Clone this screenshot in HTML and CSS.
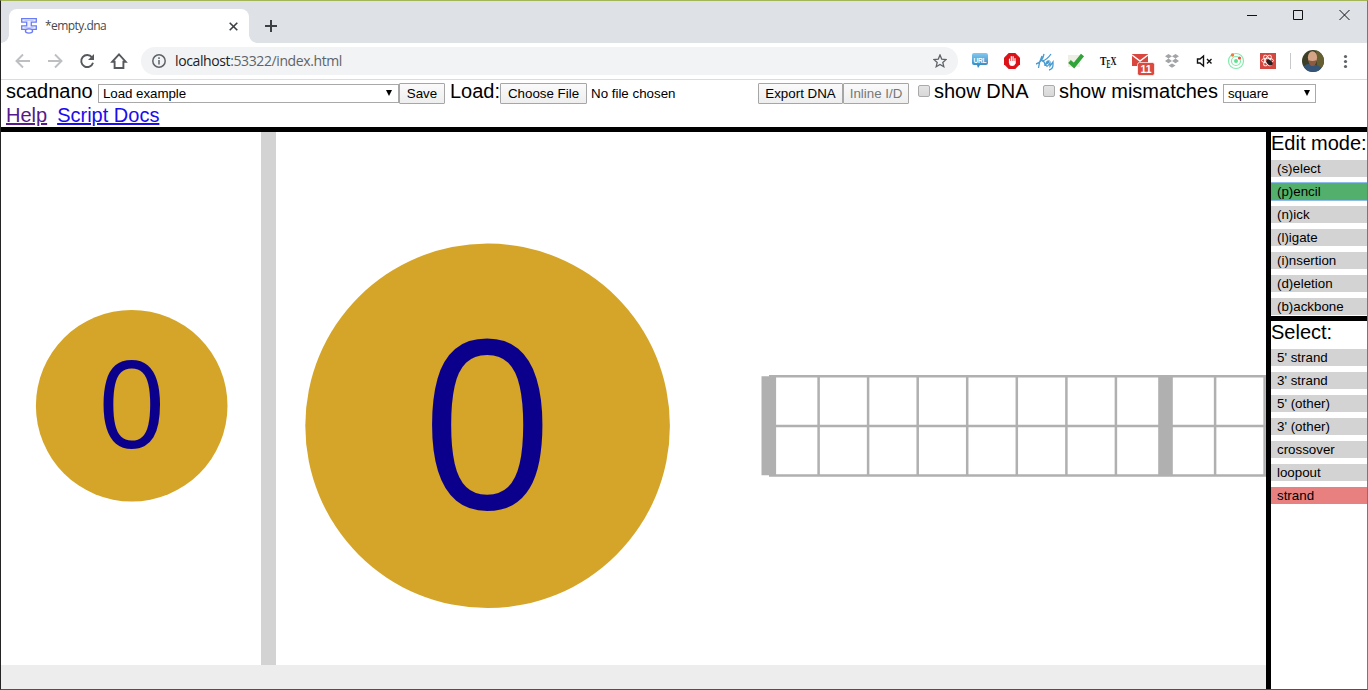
FILE: index.html
```html
<!DOCTYPE html>
<html lang="en">
<head>
<meta charset="utf-8">
<title>*empty.dna</title>
<link rel="stylesheet" href="styles.css">
</head>
<body>
<div class="window">
  <div class="tabstrip">
    <div class="tab">
      <svg class="favicon" width="16" height="16" viewBox="0 0 16 16" fill="#eef0ff" stroke="#6a7cf5" stroke-width="1.3"><path d="M.7.7h14.600v3.500h-5v3.600h5v3.500H.7V7.800h5V4.200h-5z"/><path d="M3.500 2.500h9M3.500 9.500h9" stroke="#c3cafc" stroke-width="1"/><ellipse cx="8" cy="13" rx="3.600" ry="2.100" fill="#fff"/></svg>
      <span class="tab-title">*empty.dna</span>
      <svg class="tab-close" width="9" height="9" viewBox="0 0 9 9" stroke="#3c4043" stroke-width="1.6"><path d="M.7.7l7.600 7.600M8.300.7L.7 8.300"/></svg>
    </div>
    <svg class="newtab" width="12" height="12" viewBox="0 0 12 12" stroke="#3c4043" stroke-width="2"><path d="M6 0v12M0 6h12"/></svg>
    <svg class="winbtns" width="104" height="12" viewBox="0 0 104 12" fill="none" stroke="#111" stroke-width="1"><path d="M0 5.500h10M46.500.5h9v9h-9z"/><path d="M92.500 0l10 10M102.500 0l-10 10"/></svg>
  </div>
  <div class="toolbar">
    <svg class="nav" width="130" height="18" viewBox="0 0 130 18" fill="none" stroke="#bdbfc2" stroke-width="1.900">
      <path d="M15 9H2M8 2.500L1.500 9 8 15.500M33 9h13M40 2.500L46.500 9 40 15.500"/>
      <path d="M77 5.400A6 6 0 1 0 78 10.700" stroke="#55585c"/><path d="M79 2v6h-6z" fill="#55585c" stroke="none"/>
      <path d="M97.300 9.700L104 2.300l6.700 7.400h-2.300V16h-8.800V9.700z" stroke="#55585c"/>
    </svg>
    <div class="omnibox">
      <svg width="14" height="14" viewBox="0 0 14 14" fill="none" stroke="#5f6368" stroke-width="1.500"><circle cx="7" cy="7" r="6.200"/><path d="M7 6v4.500M7 3.300v1.600"/></svg>
      <span class="url"><b>localhost</b>:53322/index.html</span>
      <svg class="star" width="14" height="14" viewBox="0 0 14 14" fill="none" stroke="#5f6368" stroke-width="1.300"><path d="M7 1l1.700 4.100 4.400.4-3.300 2.900 1 4.300L7 10.400l-3.800 2.300 1-4.300L.9 5.500l4.400-.4z"/></svg>
    </div>
    <svg class="extensions" width="392" height="32" viewBox="964 45 392 32">
      <defs><linearGradient id="bubble" x2="0" y2="1"><stop stop-color="#83c9f1"/><stop offset="1" stop-color="#287db8"/></linearGradient>
      <clipPath id="face"><circle cx="1313" cy="61" r="11"/></clipPath></defs>
      <path d="M974 53h12q2 0 2 2v8q0 2-2 2h-6l-2 3-1-3h-3q-2 0-2-2v-8q0-2 2-2z" fill="url(#bubble)"/><text x="973.500" y="63" class="ico-url" textLength="13">URL</text>
      <path d="M1008.700 53h6.600l4.700 4.700v6.600l-4.700 4.700h-6.600l-4.700-4.700v-6.600z" fill="#dc1219"/>
      <path d="M1009.500 63v-4M1011.300 62v-5.500M1013.100 62v-5.500M1015 63v-4.500" stroke="#fff" stroke-width="1.200" stroke-linecap="round"/><path d="M1009 61h6.500v2.500q-1 2.500-3 2.500-2 0-3-1z" fill="#fff"/>
      <g fill="none" stroke="#4a9bcf" stroke-width="1.300"><path d="M1036 64c4-1 7-5 8-10M1042 56q-3 6-3.500 12M1051 54q-4 6-9 7 3 0 3 5M1046 64q3-1 3-3-3 0-3 4 1 3 4-2v3l3-4v3q0 4-4 5"/></g>
      <path d="M1068 55h12v12h-12z" fill="#efeee4"/><path d="M1069.500 61.500l4.500 4 8.500-10.500" fill="none" stroke="#30a33a" stroke-width="4"/>
      <g class="ico-tex"><text x="1100" y="65" textLength="6.500" lengthAdjust="spacingAndGlyphs">T</text><text x="1106.500" y="67.500" textLength="4" lengthAdjust="spacingAndGlyphs">E</text><text x="1110.500" y="65" textLength="6" lengthAdjust="spacingAndGlyphs">X</text></g>
      <path d="M1132 54h16v12h-16z" fill="#d9463e"/><path d="M1132 55l8 6 8-6" fill="none" stroke="#fff" stroke-width="1.500"/>
      <rect x="1137.500" y="62.500" width="17" height="13" rx="2" fill="#dc4a3e" stroke="#fff" stroke-width=".7"/><text x="1140.500" y="73" class="badge" textLength="11">11</text>
      <path d="M1168.500 54l3.500 2.300 3.500-2.300 3.500 2.300-3.500 2.300 3.500 2.300-3.500 2.300-3.500-2.300-3.500 2.300-3.500-2.300 3.500-2.300-3.500-2.300zM1172 63.500l3.500 2-3.500 2.300-3.500-2.300z" fill="#a2a4a7"/><path d="M1172 56.300l3.500 2.300-3.500 2.300-3.500-2.300z" fill="#fff"/>
      <path d="M1197.500 59h2.500l3.500-3v10l-3.500-3h-2.500z" fill="none" stroke="#111" stroke-width="1.400"/><path d="M1207 59l4.500 4.500M1211.500 59l-4.500 4.500" stroke="#111" stroke-width="1.400"/>
      <g fill="none" stroke="#86e9ad" stroke-width="1.200"><circle cx="1236" cy="61" r="7.500"/><circle cx="1236" cy="61" r="4.500"/></g><circle cx="1236" cy="61" r="2" fill="#5fe08f"/><circle cx="1232.500" cy="55" r="1.700" fill="#f37a3c"/><circle cx="1239.500" cy="58" r="1.600" fill="#ef4f43"/>
      <path d="M1260 53h16v16h-16z" fill="#d2473f"/><g fill="none" stroke="#fff" stroke-width=".9"><ellipse cx="1267.500" cy="60.500" rx="6" ry="2.300"/><ellipse cx="1267.500" cy="60.500" rx="6" ry="2.300" transform="rotate(60 1267.500 60.500)"/><ellipse cx="1267.500" cy="60.500" rx="6" ry="2.300" transform="rotate(-60 1267.500 60.500)"/></g><ellipse cx="1269.500" cy="62.500" rx="3.500" ry="2.300" transform="rotate(40 1269.500 62.500)" fill="#222"/>
      <path d="M1290.500 53v16" stroke="#c6c8cb"/>
      <g clip-path="url(#face)"><path d="M1301 49h24v24h-24z" fill="#3c3f26"/><path d="M1316 49h9v18h-8z" fill="#665f32"/><path d="M1302 73q1-10 8-9l6 1q6 1 8 8z" fill="#365475"/><ellipse cx="1312.500" cy="57.500" rx="4.600" ry="6.200" fill="#d5a486"/><path d="M1308.500 60q4 2 8 0-.5 6-4 6-3.500 0-4-6z" fill="#8b5b43"/></g>
      <g fill="#5f6368"><circle cx="1345.500" cy="56.500" r="1.600"/><circle cx="1345.500" cy="61.500" r="1.600"/><circle cx="1345.500" cy="66.500" r="1.600"/></g>
    </svg>
  </div>
  <header class="menu">
    <div class="menu-row">
      <span class="brand">scadnano</span>
      <div class="select examples">Load example<i></i></div>
      <button class="save">Save</button>
      <span class="load">Load:</span>
      <button class="choose">Choose File</button>
      <span class="nofile">No file chosen</span>
      <button class="export">Export DNA</button>
      <button class="inline" disabled>Inline I/D</button>
      <label><input type="checkbox" class="check">show DNA</label>
      <label class="mismatches"><input type="checkbox" class="check">show mismatches</label>
      <div class="select grid-type">square<i></i></div>
    </div>
    <div class="links"><a class="visited" href="#">Help</a><a href="#">Script Docs</a></div>
  </header>
  <div class="content">
    <div class="views">
      <div class="panes">
        <svg class="side-view" width="260" height="533" viewBox="1 132 260 533"><circle cx="131.700" cy="405.700" r="95.800" fill="#d4a529"/><text class="helix side-num" x="131.700" y="448">0</text></svg>
        <div class="divider"></div>
        <svg class="main-view" width="990" height="533" viewBox="276 132 990 533">
          <circle cx="487.600" cy="425.800" r="182.300" fill="#d4a529"/><text class="helix main-num" x="487.300" y="508.500">0</text>
          <g fill="none" stroke="#b0b0b0"><path stroke-width="2.500" d="M769 376.300h497M769 426h497M769 475.500h497M818.600 376v100M868.100 376v100M917.700 376v100M967.200 376v100M1016.800 376v100M1066.400 376v100M1115.900 376v100M1215.100 376v100M1264.600 376v100"/><path stroke-width="14.600" d="M768.800 376.300v99M1165.500 376.300v99"/></g>
        </svg>
      </div>
      <div class="footer"></div>
    </div>
    <aside class="modes">
      <section class="edit"><h2>Edit mode:</h2>
        <button>(s)elect</button><button class="active">(p)encil</button><button>(n)ick</button><button>(l)igate</button><button>(i)nsertion</button><button>(d)eletion</button><button>(b)ackbone</button>
      </section>
      <section><h2>Select:</h2>
        <button>5' strand</button><button>3' strand</button><button>5' (other)</button><button>3' (other)</button><button>crossover</button><button>loopout</button><button class="chosen">strand</button>
      </section>
    </aside>
  </div>
</div>
</body>
</html>
```
FILE: styles.css
```css
* { box-sizing: border-box; }
body { margin: 0; width: 1368px; height: 690px; overflow: hidden; font-family: "Liberation Sans", sans-serif; font-size: 20px; color: #000; }
svg { display: block; flex: none; }
.window { display: flex; flex-direction: column; height: 690px; border: 1px solid; border-color: #a3b557 #777 #5c5232 #242424; background: #fff; }
.tabstrip { height: 42px; flex: none; background: #dee1e6; display: flex; padding-left: 8px; }
.tab { width: 240px; height: 34px; margin-top: 8px; background: #fff; border-radius: 8px 8px 0 0; display: flex; align-items: center; padding: 0 12px 0 12px; position: relative; }
.tab::before, .tab::after { content: ""; position: absolute; bottom: 0; width: 8px; height: 8px; }
.tab::before { left: -8px; background: radial-gradient(circle at 0 0, transparent 7.5px, #fff 8px); }
.tab::after { right: -8px; background: radial-gradient(circle at 100% 0, transparent 7.5px, #fff 8px); }
.tab-title { font: 12px "Open Sans", sans-serif; letter-spacing: -.55px; color: #45494d; margin: -1px 0 0 8px; }
.tab-close { margin-left: auto; margin-right: -.5px; }
.newtab { margin: 19px 0 0 16px; }
.winbtns { margin: 9px 16px 0 auto; }
.toolbar { height: 37px; flex: none; display: flex; align-items: center; border-bottom: 1px solid #dadce0; }
.nav { margin-left: 14px; }
.omnibox { width: 817px; height: 28px; margin-left: -4px; border-radius: 14px; background: #f1f3f4; display: flex; align-items: center; padding: 0 11px; }
.url { font: 14px "Open Sans", sans-serif; color: #5f6368; margin: -1px 0 0 9px; letter-spacing: -.39px; }
.url b { font-weight: 400; color: #202124; }
.star { margin-left: auto; }
.extensions { margin-left: 6px; }
.ico-url { font: bold 6.500px "Liberation Sans", sans-serif; fill: #fff; }
.ico-tex { font: bold 12px "Liberation Serif", serif; fill: #111; }
.badge { font: bold 10.500px "Liberation Sans", sans-serif; fill: #fff; }

.menu { height: 52px; flex: none; border-bottom: 5px solid #000; padding-left: 5px; }
.menu-row { height: 24px; display: flex; align-items: flex-start; line-height: 23px; white-space: nowrap; }
.brand { width: 92px; }
.select { height: 19px; margin-top: 4px; border: 1px solid #a9a9a9; font-size: 13.333px; line-height: 18px; padding: 0 6px 0 4px; display: flex; justify-content: space-between; letter-spacing: -.05px; }
.select i { width: 6px; height: 6px; margin-top: 5px; background: #000; clip-path: polygon(0 0, 100% 0, 50% 100%); }
.examples { width: 301px; }
button { font: 13.333px "Liberation Sans", sans-serif; color: #000; padding: 0; white-space: nowrap; }
.menu button { height: 21px; margin-top: 3px; border: 1px solid #a6a6a6; border-radius: 1px; background: linear-gradient(#fafafa, #eee); }
.menu .save { width: 46px; }
.load { width: 55px; padding-left: 5px; }
.menu .choose { width: 87px; }
.nofile { width: 171px; padding-left: 4px; font-size: 13.333px; line-height: 27px; }
.menu .export { width: 85px; }
.menu .inline { width: 66px; color: #777; }
label { display: flex; padding-left: 9px; width: 125px; }
.check { appearance: none; width: 12px; height: 12px; flex: none; margin: 5px 4px 0 0; border: 1px solid #aaa; border-radius: 2px; background: linear-gradient(#e4e4e4, #d8d8d8); }
.mismatches { width: 189px; }
.grid-type { width: 93px; padding-right: 5px; }
.links { line-height: 23px; display: flex; gap: 10px; }
.links a { color: #1a0dee; text-decoration-thickness: 2px; text-underline-offset: 1px; }
.links .visited { color: #551a8b; }

.content { flex: 1; display: flex; min-height: 0; }
.views { width: 1265px; flex: none; }
.panes { display: flex; }
.divider { width: 15px; background: #d3d3d3; }
.helix { font-family: "Open Sans", sans-serif; fill: #0b008b; text-anchor: middle; }
.side-num { font-size: 120px; }
.main-num { font-size: 234.500px; }
.footer { height: 24px; background: #ededed; }
.modes { flex: 1; border-left: 5px solid #000; }
.modes section { display: flex; flex-direction: column; gap: 6px; }
.modes .edit { height: 189px; border-bottom: 5px solid #000; }
h2 { margin: 0; font-size: 20px; font-weight: 400; line-height: 22px; white-space: nowrap; }
.modes button { height: 17px; flex: none; border: 0; background: #d3d3d3; text-align: left; padding-left: 6px; line-height: 17px; }
.modes .active { background: #52b06c; box-shadow: 0 1px #8fbcec, 0 -1px #8fbcec; }
.modes .chosen { background: #e98080; }
```
